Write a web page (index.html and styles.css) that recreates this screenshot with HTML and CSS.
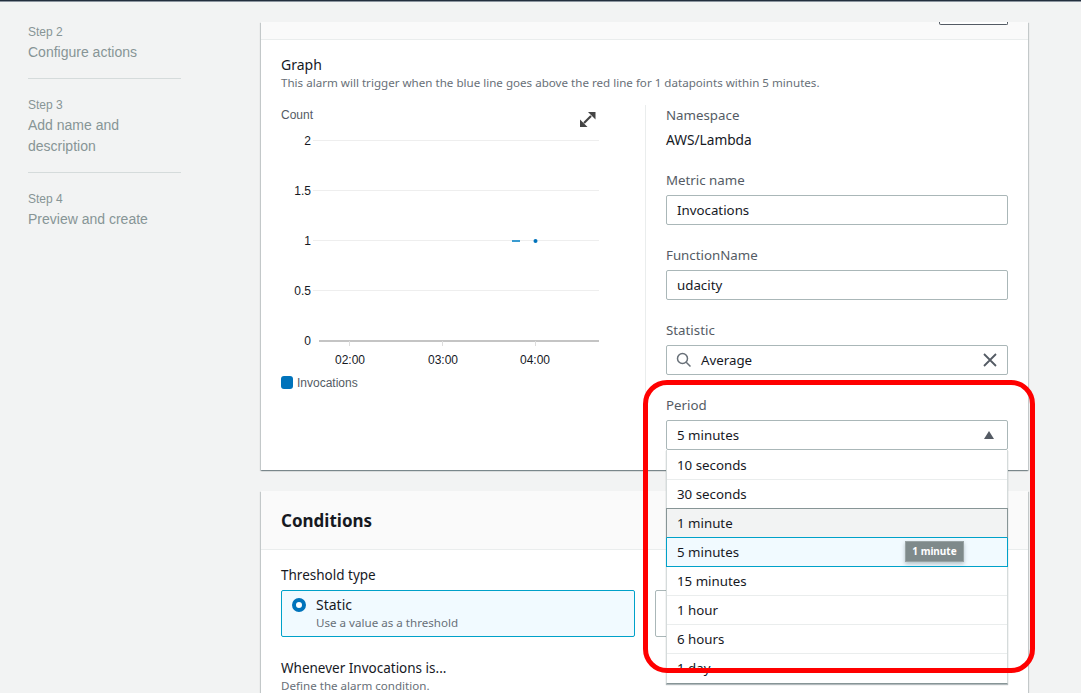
FILE: index.html
```html
<!DOCTYPE html>
<html lang="en">
<head>
<meta charset="utf-8">
<title>Specify metric and conditions</title>
<link rel="stylesheet" href="styles.css">
</head>
<body>
<div class="topbar"></div>
<div class="page">
  <aside class="steps">
    <div class="step"><div class="step-num">Step 2</div><div class="step-name">Configure actions</div></div>
    <div class="step"><div class="step-num">Step 3</div><div class="step-name">Add name and description</div></div>
    <div class="step"><div class="step-num">Step 4</div><div class="step-name">Preview and create</div></div>
  </aside>
  <main class="content">
    <section class="panel">
      <div class="metric-head"><div class="stub-button"></div></div>
      <div class="metric-body">
        <h3 class="graph-title">Graph</h3>
        <p class="graph-desc">This alarm will trigger when the blue line goes above the red line for 1 datapoints within 5 minutes.</p>
        <div class="columns">
          <div class="chart-col">
            <svg class="chart" width="330" height="300" viewBox="0 0 330 300">
              <g class="grid">
                <line x1="32" y1="35.5" x2="318" y2="35.5"/>
                <line x1="32" y1="85.5" x2="318" y2="85.5"/>
                <line x1="32" y1="135.5" x2="318" y2="135.5"/>
                <line x1="32" y1="185.5" x2="318" y2="185.5"/>
              </g>
              <line class="axis" x1="38" y1="236" x2="318" y2="236"/>
              <g class="ticks">
                <line x1="68.5" y1="236" x2="68.5" y2="241"/>
                <line x1="161.5" y1="236" x2="161.5" y2="241"/>
                <line x1="254.5" y1="236" x2="254.5" y2="241"/>
              </g>
              <text class="t-count" x="0" y="14">Count</text>
              <g class="t-y">
                <text x="30" y="40">2</text>
                <text x="30" y="90">1.5</text>
                <text x="30" y="140">1</text>
                <text x="30" y="190">0.5</text>
                <text x="30" y="240">0</text>
              </g>
              <g class="t-x">
                <text x="69" y="259">02:00</text>
                <text x="162" y="259">03:00</text>
                <text x="254" y="259">04:00</text>
              </g>
              <line class="dash" x1="231" y1="136" x2="239" y2="136"/>
              <circle class="dot" cx="254.5" cy="136" r="2"/>
              <rect class="swatch" x="0" y="271" width="12" height="13" rx="3"/>
              <text class="t-legend" x="16" y="282">Invocations</text>
              <g class="expand">
                <path d="M303 18 L310 11"/>
                <path class="fill" d="M307 7 H314.500 V14.500 Z"/>
                <path class="fill" d="M299 14.500 V22 H306.500 Z"/>
              </g>
            </svg>
          </div>
          <div class="fields">
            <div class="field">
              <div class="label">Namespace</div>
              <div class="static-value">AWS/Lambda</div>
            </div>
            <div class="field">
              <div class="label">Metric name</div>
              <div class="input">Invocations</div>
            </div>
            <div class="field">
              <div class="label">FunctionName</div>
              <div class="input">udacity</div>
            </div>
            <div class="field">
              <div class="label">Statistic</div>
              <div class="input input-search">
                <svg class="icon-search" width="16" height="16" viewBox="0 0 16 16"><circle cx="6.500" cy="6.500" r="5"/><path d="M10.200 10.200 L14.500 14.500"/></svg>
                <span class="input-text">Average</span>
                <svg class="icon-clear" width="14" height="14" viewBox="0 0 14 14"><path d="M1 1 L13 13 M13 1 L1 13"/></svg>
              </div>
            </div>
            <div class="field field-select">
              <div class="label">Period</div>
              <div class="input input-select">
                <span>5 minutes</span>
                <svg class="icon-caret" width="10" height="8" viewBox="0 0 10 8"><path d="M5 0 L10 8 H0 Z"/></svg>
              </div>
              <ul class="menu">
                <li class="opt">10 seconds</li>
                <li class="opt">30 seconds</li>
                <li class="opt opt-hover">1 minute</li>
                <li class="opt opt-selected">5 minutes<span class="tooltip">1 minute</span></li>
                <li class="opt">15 minutes</li>
                <li class="opt">1 hour</li>
                <li class="opt">6 hours</li>
                <li class="opt">1 day</li>
              </ul>
            </div>
          </div>
        </div>
      </div>
    </section>
    <section class="panel">
      <h2 class="panel-title">Conditions</h2>
      <div class="conditions-body">
        <div class="label-dark">Threshold type</div>
        <div class="cards">
          <div class="card card-on">
            <span class="radio"></span>
            <div><div class="card-title">Static</div><div class="card-sub">Use a value as a threshold</div></div>
          </div>
          <div class="card"></div>
        </div>
        <div class="label-dark whenever">Whenever Invocations is...</div>
        <div class="hint">Define the alarm condition.</div>
      </div>
    </section>
  </main>
  <div class="annotation"></div>
</div>
</body>
</html>
```
FILE: styles.css
```css
* { box-sizing: border-box; }
html, body { margin: 0; height: 693px; overflow: hidden; }
body { background: #f2f3f3; font-family: "Noto Sans", "Open Sans", sans-serif; font-size: 13.300px; color: #16191f; }
.topbar { height: 2px; background: #232f3e; border-bottom: 1px solid #8b949e; }
.page { position: relative; display: flex; height: 691px; }

.steps { width: 260px; padding: 20px 0 0 28px; flex: none; font-family: "Liberation Sans", Arial, sans-serif; color: #879596; }
.step { width: 153px; padding-bottom: 15px; margin-bottom: 16px; border-bottom: 1px solid #d5dbdb; }
.step:last-child { border-bottom: 0; }
.step-num { font-size: 12px; line-height: 20px; }
.step-name { font-size: 14px; line-height: 21px; }

.content { width: 768px; padding-top: 20px; flex: none; }
.panel { background: #fff; margin-left: 1px; margin-bottom: 21px; box-shadow: 0 1px 1px 0 rgba(0,28,36,.3), 1px 1px 1px 0 rgba(0,28,36,.15), -1px 1px 1px 0 rgba(0,28,36,.15); }
.metric-head { height: 18px; background: #fafafa; border-bottom: 1px solid #eaeded; display: flex; justify-content: flex-end; padding-right: 20px; }
.stub-button { width: 69px; height: 3px; border: 1px solid #545b64; border-top: 0; border-radius: 0 0 2px 2px; background: #fff; }
.metric-body { padding: 15px 20px 20px; }
.graph-title { margin: 0; font-size: 14px; line-height: 20px; font-weight: 400; }
.graph-desc { margin: 0 0 14px; font-size: 11.600px; line-height: 16px; color: #687078; }
.columns { display: flex; }
.chart-col { width: 365px; flex: none; border-right: 1px solid #eaeded; }
.chart { display: block; }
.chart text { font-family: "Liberation Sans", Arial, sans-serif; font-size: 12px; fill: #16191f; }
.grid line { stroke: #eeeeee; stroke-width: 1; }
.axis { stroke: #c4c4c4; stroke-width: 2; }
.ticks line { stroke: #dddddd; stroke-width: 1; }
.chart .t-count { fill: #545b64; }
.t-y text { text-anchor: end; }
.t-x text { text-anchor: middle; }
.chart .t-legend { fill: #545b64; }
.dash { stroke: #3a9bd0; stroke-width: 2; }
.dot { fill: #0073bb; }
.swatch { fill: #0073bb; }
.expand path { fill: none; stroke: #444; stroke-width: 2.200; }
.expand .fill { fill: #444; stroke: none; }

.fields { flex: 1; padding-left: 20px; display: flex; flex-direction: column; gap: 20px; }
.field { display: flex; flex-direction: column; gap: 5px; position: relative; }
.label { line-height: 20px; color: #545b64; }
.static-value { font-size: 13.700px; line-height: 20px; }
.input { height: 30px; border: 1px solid #aab7b8; border-radius: 2px; padding: 0 9px 0 10px; line-height: 28px; display: flex; align-items: center; background: #fff; }
.input-text { flex: 1; margin-left: 8px; }
.icon-search { fill: none; stroke: #687078; stroke-width: 1.500; margin-left: -1px; margin-right: 1px; }
.icon-clear { fill: none; stroke: #545b64; stroke-width: 1.800; margin-right: 1px; }
.input-select { justify-content: space-between; }
.icon-caret { fill: #545b64; margin-right: 4px; }

.menu { position: absolute; left: 0; right: 0; top: 55px; margin: 0; padding: 1px 0 0; list-style: none; background: #fff; border: 1px solid #d5dbdb; border-top: 0; border-bottom-color: #879596; box-shadow: 0 1px 1px rgba(0,28,36,.3); z-index: 2; }
.opt { height: 29px; line-height: 29px; padding: 0 9px 0 10px; border-bottom: 1px solid #eaeded; position: relative; }
.opt:last-child { border-bottom: 0; }
.opt-hover { height: 30px; background: #f2f3f3; border: 1px solid #879596; border-bottom-color: #00a1c9; margin: -1px -1px 0; padding-left: 10px; line-height: 28px; }
.opt-selected { background: #f1faff; border: 1px solid #00a1c9; border-top: 0; margin: 0 -1px; padding-left: 10px; line-height: 28px; }
.tooltip { position: absolute; left: 238px; top: 3px; width: 59px; height: 21px; background: #7f8a8b; border: 1px solid #98a2a3; color: #fff; font-size: 10px; font-weight: 700; line-height: 18px; text-align: center; box-shadow: 0 2px 4px rgba(0,28,36,.25); }

.panel-title { margin: 0; height: 59px; padding-left: 20px; font-size: 17px; font-weight: 700; line-height: 59px; background: #fafafa; border-bottom: 1px solid #eaeded; }
.conditions-body { padding: 15px 20px 0; }
.label-dark { line-height: 20px; font-size: 13.500px; }
.cards { display: flex; gap: 20px; margin-top: 5px; }
.card { flex: 1; height: 47px; border: 1px solid #aab7b8; border-radius: 2px; display: flex; gap: 10px; padding: 4px 10px; }
.card-on { background: #f1faff; border-color: #00a1c9; }
.radio { width: 14px; height: 14px; margin-top: 3px; flex: none; border-radius: 50%; border: 4px solid #0073bb; background: #fff; }
.card-title { font-size: 14px; line-height: 20px; }
.card-sub { font-size: 11.600px; line-height: 16px; color: #687078; }
.whenever { margin-top: 21px; }
.hint { font-size: 11.600px; line-height: 16px; color: #687078; }

.annotation { position: absolute; left: 643px; top: 378px; width: 392px; height: 293px; border: 5px solid #ff0000; border-radius: 24px; z-index: 3; }
```
